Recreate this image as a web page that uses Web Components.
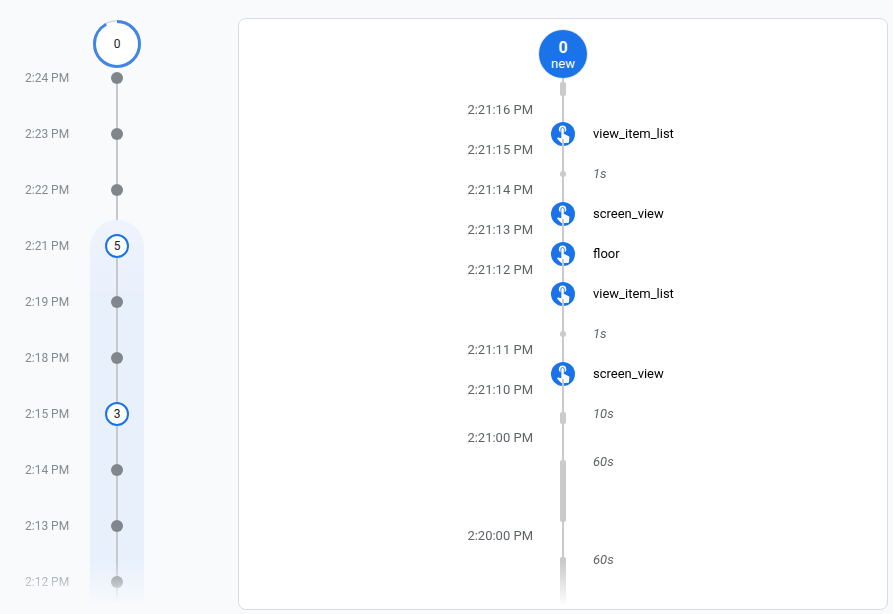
<!DOCTYPE html>
<html>
<head>
<meta charset="utf-8">
<title>Realtime events</title>
<style>
    html, body {
        margin: 0;
        height: 100%;
        overflow: hidden;
        background: #f8fafc;
        font-family: Roboto, "Liberation Sans", sans-serif;
    }
</style>
</head>
<body>
<debug-page>
    <minute-rail slot="rail" total="0">
        <rail-row first>2:24 PM</rail-row>
        <rail-row>2:23 PM</rail-row>
        <rail-row>2:22 PM</rail-row>
        <rail-row count="5" band="start">2:21 PM</rail-row>
        <rail-row band="mid">2:19 PM</rail-row>
        <rail-row band="mid">2:18 PM</rail-row>
        <rail-row count="3" band="mid">2:15 PM</rail-row>
        <rail-row band="mid">2:14 PM</rail-row>
        <rail-row band="mid">2:13 PM</rail-row>
        <rail-row band="mid" last>2:12 PM</rail-row>
    </minute-rail>
    <event-panel>
        <event-row kind="bar" style="--row-h:21px;--top:4px;--bar-h:14px"></event-row>
        <event-row kind="event" time="2:21:16 PM">view_item_list</event-row>
        <event-row kind="dot" time="2:21:15 PM">1s</event-row>
        <event-row kind="event" time="2:21:14 PM">screen_view</event-row>
        <event-row kind="event" time="2:21:13 PM">floor</event-row>
        <event-row kind="event" time="2:21:12 PM">view_item_list</event-row>
        <event-row kind="dot">1s</event-row>
        <event-row kind="event" time="2:21:11 PM">screen_view</event-row>
        <event-row kind="bar" time="2:21:10 PM" style="--row-h:48px;--bar-h:12px">10s</event-row>
        <event-row kind="bar" time="2:21:00 PM" style="--row-h:98px;--bar-h:62px">60s</event-row>
        <event-row kind="bar" time="2:20:00 PM" style="--row-h:81px;--top:32px;--bar-h:60px">60s</event-row>
    </event-panel>
</debug-page>

<script>
class DebugPage extends HTMLElement {
    css = `
    :host {
        display: flex;
        align-items: flex-start;
        height: 614px;
    }

    .rail {
        flex: none;
        width: 238px;
    }

    .main {
        flex: none;
        width: 650px;
        padding-top: 18px;
    }
    `

    connectedCallback() {
        this.attachShadow({ mode: "open" });
        this.shadowRoot.innerHTML = `
        <style>${this.css.trim()}</style>
        <div class="rail"><slot name="rail"></slot></div>
        <div class="main"><slot></slot></div>
        `
    }
}

class MinuteRail extends HTMLElement {
    css = `
    :host {
        display: block;
        padding-top: 20px;
    }

    .ring {
        display: flex;
        width: 48px;
        height: 48px;
        margin-left: 93px;
        position: relative;
        align-items: center;
        justify-content: center;
        font-size: 12px;
        color: #202124;
    }

    .ring svg {
        position: absolute;
        inset: 0;
    }

    .ring span {
        position: relative;
    }

    .rows {
        display: flex;
        flex-direction: column;
        height: 536px;
        overflow: hidden;
        -webkit-mask-image: linear-gradient(#000 calc(100% - 42px), transparent);
        mask-image: linear-gradient(#000 calc(100% - 42px), transparent);
    }
    `

    connectedCallback() {
        const total = this.getAttribute("total");
        this.attachShadow({ mode: "open" });
        this.shadowRoot.innerHTML = `
        <style>${this.css.trim()}</style>
        <div class="ring">
            <svg width="48" height="48" viewBox="0 0 48 48" fill="#fff">
                <circle cx="24" cy="24" r="22.5" stroke="#d9d9d9" stroke-width="3"></circle>
                <circle cx="24" cy="24" r="22.5" stroke="#4285e8" stroke-width="3" pathLength="100"
                    stroke-dasharray="92 100" transform="rotate(-90 24 24)"></circle>
            </svg>
            <span>${total}</span>
        </div>
        <div class="rows"><slot></slot></div>
        `
    }
}

class RailRow extends HTMLElement {
    css = `
    :host {
        display: flex;
        flex: none;
        height: 56px;
        padding-left: 25px;
        font-size: 12px;
        line-height: 20px;
        color: #868b90;
    }

    .time {
        width: 65px;
    }

    .cell {
        display: flex;
        justify-content: center;
        width: 54px;
        position: relative;
    }

    .cell::before {
        content: "";
        position: absolute;
        top: 0;
        bottom: 0;
        left: 26px;
        width: 2px;
        background: #c6c8cc;
    }

    :host([first]) .cell::before {
        top: 10px;
    }

    .band {
        position: absolute;
        inset: 0;
        z-index: -1;
        background: #e8f0fc;
    }

    :host([band]) .cell {
        isolation: isolate;
    }

    :host([band="start"]) .band {
        top: -16px;
        border-radius: 27px 27px 0 0;
        background: linear-gradient(#eef3fd, #eaf1fc);
    }

    .slot {
        display: flex;
        align-items: center;
        justify-content: center;
        height: 20px;
        position: relative;
    }

    .dot {
        width: 12px;
        height: 12px;
        border-radius: 50%;
        background: #80868b;
    }

    .count {
        display: flex;
        flex: none;
        align-items: center;
        justify-content: center;
        box-sizing: border-box;
        width: 24px;
        height: 24px;
        border: 2px solid #1a73e8;
        border-radius: 50%;
        background: #fff;
        font-size: 12px;
        color: #202124;
    }
    `

    connectedCallback() {
        const count = this.getAttribute("count");
        const band = this.hasAttribute("band") ? `<div class="band"></div>` : "";
        const node = count ? `<div class="count">${count}</div>` : `<div class="dot"></div>`;
        this.attachShadow({ mode: "open" });
        this.shadowRoot.innerHTML = `
        <style>${this.css.trim()}</style>
        <div class="time"><slot></slot></div>
        <div class="cell">
            ${band}
            <div class="slot">${node}</div>
        </div>
        `
    }
}

class EventPanel extends HTMLElement {
    css = `
    :host {
        display: block;
        box-sizing: border-box;
        height: 592px;
        padding-top: 11px;
        background: #fff;
        border: 1px solid #dadce0;
        border-radius: 8px;
        overflow: hidden;
    }

    .head {
        display: flex;
        flex-direction: column;
        align-items: center;
        box-sizing: border-box;
        width: 48px;
        height: 48px;
        padding-top: 9px;
        margin: 0 auto;
        border-radius: 50%;
        background: #1a73e8;
        box-shadow: 0 0 0 1px #e8eaed;
        color: #fff;
    }

    .head b {
        font-size: 16px;
        font-weight: 700;
        line-height: 18px;
        margin-bottom: -1px;
    }

    .head span {
        font-size: 13px;
        line-height: 15px;
    }

    .rows {
        display: flex;
        flex-direction: column;
        -webkit-mask-image: linear-gradient(#000 calc(100% - 44px), transparent);
        mask-image: linear-gradient(#000 calc(100% - 44px), transparent);
    }
    `

    connectedCallback() {
        this.attachShadow({ mode: "open" });
        this.shadowRoot.innerHTML = `
        <style>${this.css.trim()}</style>
        <div class="head"><b>0</b><span>new</span></div>
        <div class="rows"><slot></slot></div>
        `
    }
}

class EventRow extends HTMLElement {
    css = `
    :host {
        display: grid;
        grid-template-columns: 1fr 60px 1fr;
        flex: none;
        height: var(--row-h, 40px);
        font-size: 13px;
        line-height: 20px;
        color: #000;
    }

    .time {
        padding-top: 1px;
        text-align: right;
        color: #5f6368;
    }

    .node {
        display: flex;
        justify-content: center;
        align-items: flex-start;
        position: relative;
    }

    .node::before {
        content: "";
        position: absolute;
        top: 0;
        bottom: 0;
        left: 29px;
        width: 2px;
        background: #c8cacb;
    }

    .node > * {
        position: relative;
        flex: none;
    }

    .label {
        padding-top: 25px;
    }

    :host([kind="dot"]) .label,
    :host([kind="bar"]) .label {
        font-style: italic;
        color: #5f6368;
    }

    .icon {
        display: flex;
        align-items: center;
        justify-content: center;
        width: 24px;
        height: 24px;
        margin-top: 23px;
        border-radius: 50%;
        background: #1a73e8;
    }

    .icon svg {
        margin-top: -2px;
    }

    .dot {
        width: 6px;
        height: 6px;
        margin-top: 32px;
        border-radius: 50%;
        background: #c8cacb;
    }

    .bar {
        width: 6px;
        height: var(--bar-h, 12px);
        margin-top: var(--top, 33px);
        border-radius: 2px;
        background: #c8cacb;
    }
    `

    marker = (kind) => {
        if (kind === "event") {
            return `<div class="icon">
                <svg width="20" height="20" viewBox="0 0 24 24" fill="#fff">
                    <path d="M9 11.24V7.5C9 6.12 10.12 5 11.5 5S14 6.12 14 7.5v3.74c1.21-.81 2-2.18 2-3.74C16 5.01 13.99 3 11.5 3S7 5.01 7 7.5c0 1.56.79 2.93 2 3.74zm9.84 4.63l-4.54-2.26c-.17-.07-.35-.11-.54-.11H13v-6c0-.83-.67-1.5-1.5-1.5S10 6.67 10 7.5v10.74l-3.43-.72c-.08-.01-.15-.03-.24-.03-.31 0-.59.13-.79.33l-.79.8 4.94 4.94c.27.27.65.44 1.06.44h6.79c.75 0 1.33-.55 1.44-1.28l.75-5.27c.01-.07.02-.14.02-.2 0-.62-.38-1.16-.91-1.38z"></path>
                </svg>
            </div>`;
        }
        return `<div class="${kind}"></div>`;
    }

    connectedCallback() {
        const time = this.getAttribute("time") || "";
        this.attachShadow({ mode: "open" });
        this.shadowRoot.innerHTML = `
        <style>${this.css.trim()}</style>
        <div class="time">${time}</div>
        <div class="node">${this.marker(this.getAttribute("kind"))}</div>
        <div class="label"><slot></slot></div>
        `
    }
}

customElements.define("debug-page", DebugPage);
customElements.define("minute-rail", MinuteRail);
customElements.define("rail-row", RailRow);
customElements.define("event-panel", EventPanel);
customElements.define("event-row", EventRow);
</script>
</body>
</html>
